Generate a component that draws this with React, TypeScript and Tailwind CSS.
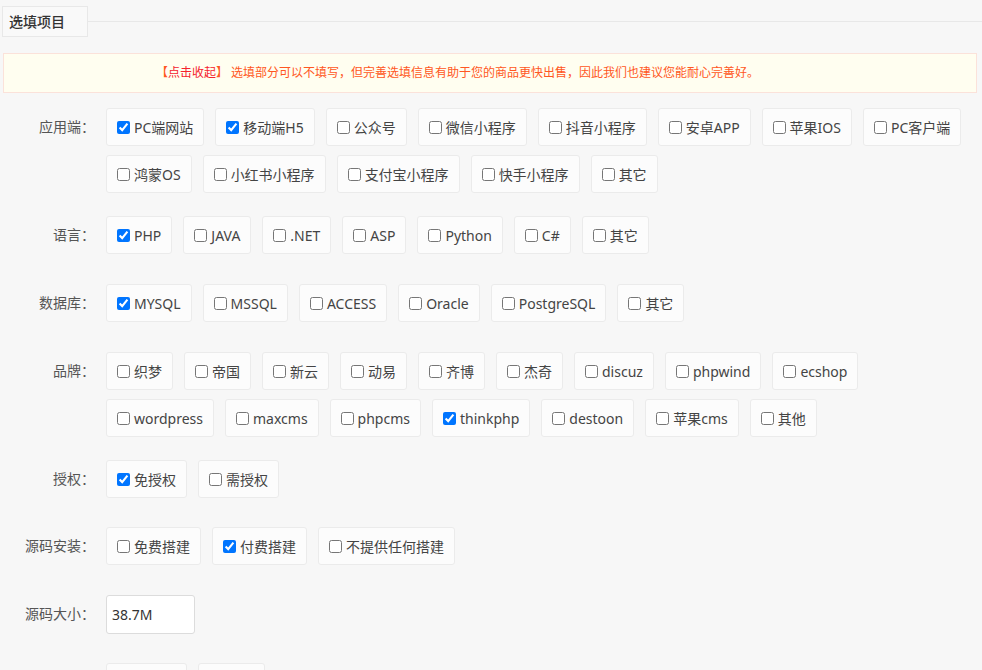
import React from 'react';

type Opt = { label: string; checked?: boolean };

type Row = {
  label: string;
  gap: string; // 与上一行的间距
  lines: Opt[][];
};

const o = (label: string, checked = false): Opt => ({ label, checked });

// 每一行手动分好折行，避免字体宽度差异导致换行位置不同
const ROWS: Row[] = [
  {
    label: '应用端：',
    gap: 'mt-[15px]',
    lines: [
      [o('PC端网站', true), o('移动端H5', true), o('公众号'), o('微信小程序'), o('抖音小程序'), o('安卓APP'), o('苹果IOS'), o('PC客户端')],
      [o('鸿蒙OS'), o('小红书小程序'), o('支付宝小程序'), o('快手小程序'), o('其它')],
    ],
  },
  {
    label: '语言：',
    gap: 'mt-[23px]',
    lines: [[o('PHP', true), o('JAVA'), o('.NET'), o('ASP'), o('Python'), o('C#'), o('其它')]],
  },
  {
    label: '数据库：',
    gap: 'mt-[30px]',
    lines: [[o('MYSQL', true), o('MSSQL'), o('ACCESS'), o('Oracle'), o('PostgreSQL'), o('其它')]],
  },
  {
    label: '品牌：',
    gap: 'mt-[30px]',
    lines: [
      [o('织梦'), o('帝国'), o('新云'), o('动易'), o('齐博'), o('杰奇'), o('discuz'), o('phpwind'), o('ecshop')],
      [o('wordpress'), o('maxcms'), o('phpcms'), o('thinkphp', true), o('destoon'), o('苹果cms'), o('其他')],
    ],
  },
  {
    label: '授权：',
    gap: 'mt-[23px]',
    lines: [[o('免授权', true), o('需授权')]],
  },
  {
    label: '源码安装：',
    gap: 'mt-[29px]',
    lines: [[o('免费搭建'), o('付费搭建', true), o('不提供任何搭建')]],
  },
];

function CheckItem({ opt }: { opt: Opt }) {
  return (
    <label className="flex h-[38px] shrink-0 items-center gap-[4px] rounded-[3px] border border-[#ebebeb] bg-[#fcfcfc] px-[10px] text-[14px] text-[#444]">
      <input type="checkbox" defaultChecked={opt.checked} className="m-0 h-[13px] w-[13px]" />
      <span className="whitespace-nowrap">{opt.label}</span>
    </label>
  );
}

function FieldLabel({ text }: { text: string }) {
  return (
    <div className="w-[95px] shrink-0 text-right text-[14px] leading-[38px] whitespace-nowrap text-[#555]">{text}</div>
  );
}

export default function App() {
  return (
    <div
      className="min-h-screen bg-[#f7f7f7] pb-10"
      style={{ fontFamily: '"Noto Sans", "Noto Sans CJK SC", sans-serif' }}
    >
      {/* 标题 tab */}
      <div className="flex items-start pt-[6px]">
        <div className="ml-[2px] flex h-[31px] w-[86px] items-center border border-[#e8e8e8] bg-[#f9f9f9] pl-[6px] text-[14px] font-medium text-[#333]">
          选填项目
        </div>
        <div className="mt-[15px] h-px flex-1 bg-[#e8e8e8]" />
      </div>

      {/* 提示 */}
      <div className="mt-[16px] mr-[5px] ml-[3px] flex h-[40px] items-center border border-[#fbe2da] bg-[#fffef0] pl-[152px] text-[12px] text-[#ff5722]">
        <span>
          【<span className="text-[#f5222d]">点击收起</span>】
        </span>
        <span className="ml-[3px]">选填部分可以不填写，但完善选填信息有助于您的商品更快出售，因此我们也建议您能耐心完善好。</span>
      </div>

      {ROWS.map((row) => (
        <div key={row.label} className={`flex ${row.gap}`}>
          <FieldLabel text={row.label} />
          <div className="ml-[11px] flex flex-col gap-[9px]">
            {row.lines.map((line, i) => (
              <div key={i} className="flex gap-[11px]">
                {line.map((opt) => (
                  <CheckItem key={opt.label} opt={opt} />
                ))}
              </div>
            ))}
          </div>
        </div>
      ))}

      <div className="mt-[30px] flex">
        <FieldLabel text="源码大小：" />
        <input
          defaultValue="38.7M"
          className="ml-[11px] h-[39px] w-[89px] rounded-[3px] border border-[#dcdcdc] bg-white px-[5px] text-[14px] text-[#333] outline-none"
        />
      </div>

      <div className="mt-[29px] flex">
        <FieldLabel text="是否加密：" />
        <div className="ml-[11px] flex gap-[11px]">
          <CheckItem opt={o('无加密')} />
          <CheckItem opt={o('加密')} />
        </div>
      </div>
    </div>
  );
}
